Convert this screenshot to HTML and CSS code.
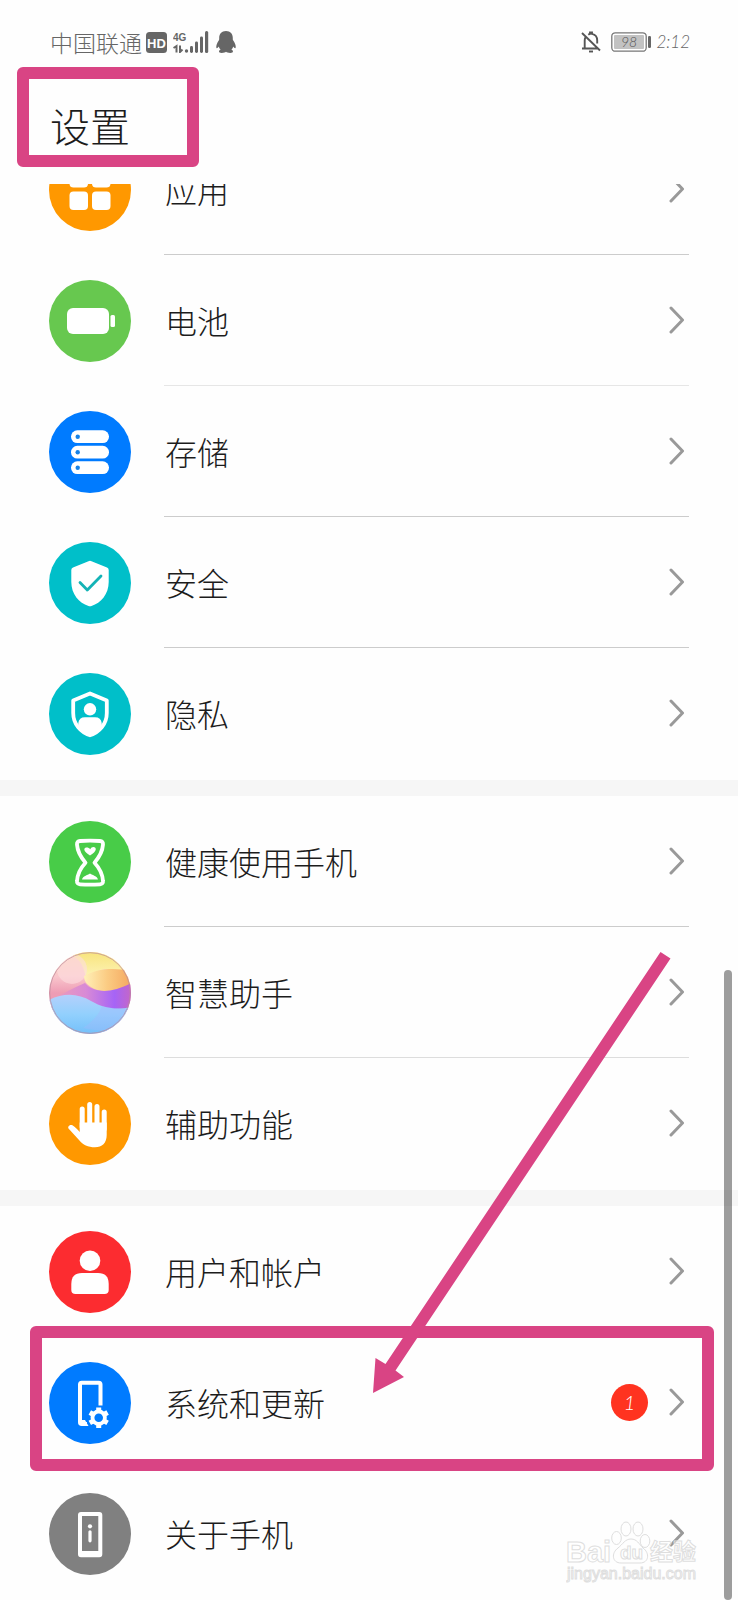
FILE: index.html
```html
<!DOCTYPE html>
<html lang="zh-CN">
<head>
<meta charset="utf-8">
<meta name="viewport" content="width=device-width, initial-scale=1">
<title>设置</title>
<link rel="stylesheet" href="styles.css">
</head>
<body>
<svg class="defs" width="0" height="0" aria-hidden="true">
  <symbol id="chevron" viewBox="0 0 16 28"><path d="M2 2 L13.500 14 L2 26" fill="none" stroke="#999" stroke-width="3" stroke-linecap="round" stroke-linejoin="round"/></symbol>
</svg>
<div class="screen">
  <header class="header">
    <div class="status">
      <div class="status-left">
        <span class="carrier">中国联通</span>
        <svg class="hd" viewBox="0 0 21 21" role="img" aria-label="HD"><rect width="21" height="21" rx="3.500" fill="#666"/><text x="10.500" y="15.500" text-anchor="middle" class="hd-text">HD</text></svg>
        <svg class="signal" viewBox="0 0 36 22" role="img" aria-label="4G">
          <text x="0" y="9.500" class="net-text">4G</text>
          <g fill="#666"><circle cx="13.500" cy="20" r="1.700"/><rect x="17" y="15" width="3" height="7" rx="1.400"/><rect x="22" y="10.500" width="3" height="11.500" rx="1.400"/><rect x="27" y="5.500" width="3" height="16.500" rx="1.400"/><rect x="32" y="0" width="3.200" height="22" rx="1.500"/></g>
          <path d="M.5 17 L3.500 15 V21.500 M7 14.500 V21 L9.500 18.500" fill="none" stroke="#666" stroke-width="2"/>
        </svg>
        <svg class="qq" viewBox="0 0 20 22" role="img" aria-label="QQ"><path d="M10 0 C5.500 0 3.200 3 3.200 7 C3.200 8 3.300 8.500 2.900 9.300 C1 12 0 14.500 .3 16.600 C.6 17.900 1.700 17 2.700 15.600 C3.100 17 3.700 18 4.600 18.800 C2.400 19.600 2.300 22 5.600 22 C8 22 9.300 21.500 10 20.800 C10.700 21.500 12 22 14.400 22 C17.700 22 17.600 19.600 15.400 18.800 C16.300 18 16.900 17 17.300 15.600 C18.300 17 19.400 17.900 19.700 16.600 C20 14.500 19 12 17.100 9.300 C16.700 8.500 16.800 8 16.800 7 C16.800 3 14.500 0 10 0Z" fill="#666"/></svg>
      </div>
      <div class="status-right">
        <svg class="bell" viewBox="0 0 20 22" role="img" aria-label="静音"><g fill="none" stroke="#555" stroke-width="1.900"><path d="M1 2 L19 19.500 M1 17.500 H16.500 M3.700 17 V9.500 C3.700 8 4 7 4.500 6.200 M7.300 3.800 C8 3.300 8.600 3 9 2.900 V1.500 H11 V2.900 C14 3.500 16.200 6 16.200 9.500 V12.500"/><path d="M8 20.500 H12"/></g></svg>
        <svg class="battery" viewBox="0 0 41 20" role="img" aria-label="98"><rect x=".8" y=".8" width="34.400" height="18.400" rx="3.500" fill="#fff" stroke="#777" stroke-width="1.300"/><rect x="3" y="3" width="30" height="14" rx="1" fill="#c2c2c2"/><rect x="37" y="4" width="3" height="12" rx="1.200" fill="#666"/><text x="18" y="15" text-anchor="middle" class="battery-text">98</text></svg>
        <time class="clock">2:12</time>
      </div>
    </div>
    <h1 class="title">设置</h1>
  </header>

  <main class="list">
    <section class="group group-first">
      <a class="row" href="#apps">
        <svg class="icon" viewBox="0 0 82 82" aria-hidden="true"><circle cx="41" cy="41" r="41" fill="#ff9800"/><g fill="#fff"><rect x="20.500" y="20" width="18.500" height="18.500" rx="4"/><rect x="43" y="20" width="18.500" height="18.500" rx="4"/><rect x="20.500" y="42.500" width="18.500" height="18.500" rx="4"/><rect x="43" y="42.500" width="18.500" height="18.500" rx="4"/></g></svg>
        <span class="body"><span class="label">应用</span><svg class="chevron"><use href="#chevron"/></svg></span>
      </a>
      <a class="row row-faint" href="#battery">
        <svg class="icon" viewBox="0 0 82 82" aria-hidden="true"><circle cx="41" cy="41" r="41" fill="#67c84f"/><rect x="18" y="28" width="42" height="26" rx="6" fill="#fff"/><rect x="61.500" y="35" width="4.500" height="12" rx="1.500" fill="#fff"/></svg>
        <span class="body"><span class="label">电池</span><svg class="chevron"><use href="#chevron"/></svg></span>
      </a>
      <a class="row" href="#storage">
        <svg class="icon" viewBox="0 0 82 82" aria-hidden="true"><circle cx="41" cy="41" r="41" fill="#007bff"/><g fill="#fff"><rect x="22" y="19.300" width="38" height="12.700" rx="6.300"/><rect x="22" y="34.800" width="38" height="12.700" rx="6.300"/><rect x="22" y="50.300" width="38" height="12.700" rx="6.300"/></g><g fill="#1682e8"><circle cx="28.700" cy="25.700" r="2.200"/><circle cx="28.700" cy="41.200" r="2.200"/><circle cx="28.700" cy="56.700" r="2.200"/></g></svg>
        <span class="body"><span class="label">存储</span><svg class="chevron"><use href="#chevron"/></svg></span>
      </a>
      <a class="row" href="#security">
        <svg class="icon" viewBox="0 0 82 82" aria-hidden="true"><circle cx="41" cy="41" r="41" fill="#00bfc9"/><path d="M39.500 19.200 Q41 18.400 42.500 19.200 L58 25.500 Q59.700 26.300 59.700 28 V40 C59.700 52 52 61 42.500 64 Q41 64.500 39.500 64 C30 61 22.300 52 22.300 40 V28 Q22.300 26.300 24 25.500 Z" fill="#fff"/><path d="M31 40.500 L38.300 48 L52 34" fill="none" stroke="#14b3b6" stroke-width="2.800" stroke-linecap="round" stroke-linejoin="round"/></svg>
        <span class="body"><span class="label">安全</span><svg class="chevron"><use href="#chevron"/></svg></span>
      </a>
      <a class="row" href="#privacy">
        <svg class="icon" viewBox="0 0 82 82" aria-hidden="true"><circle cx="41" cy="41" r="41" fill="#00bfc9"/><path d="M41 20.500 L57.800 27.500 V40 C57.800 51 50.500 59 41 62.300 C31.500 59 24.200 51 24.200 40 V27.500 Z" fill="none" stroke="#fff" stroke-width="3.800" stroke-linejoin="round"/><circle cx="41" cy="36.300" r="6.200" fill="#fff"/><path d="M29.300 53 V50 Q30 44.300 36 44.300 H46 Q52 44.300 52.700 50 V53 Q48 59.500 41 62 Q34 59.500 29.300 53 Z" fill="#fff"/></svg>
        <span class="body"><span class="label">隐私</span><svg class="chevron"><use href="#chevron"/></svg></span>
      </a>
    </section>

    <section class="group">
      <a class="row" href="#digital-balance">
        <svg class="icon" viewBox="0 0 82 82" aria-hidden="true"><circle cx="41" cy="41" r="41" fill="#48cc48"/><path d="M31 20 Q41 19.300 51 20 Q54.300 20.300 54 23.500 C53.500 31 50 36.500 45.500 41.700 C50 46.500 53.500 52 54 60 Q54.300 63 51 63.300 Q41 64 31 63.300 Q27.700 63 28 60 C28.500 52 32 46.500 36.500 41.700 C32 36.500 28.500 31 28 23.500 Q27.700 20.300 31 20 Z" fill="none" stroke="#fff" stroke-width="3.800" stroke-linejoin="round"/><path d="M41 34.500 C38 32.500 35.300 30.500 35.300 28.500 C35.500 26 39.500 26 41.300 28.200 C42.500 25.300 46.800 25.500 46.800 28.300 C46.800 30.500 44 32.500 41 34.500 Z M33 58.500 C34 55 38 54.500 41 52.500 C44 54.500 48 55 49 58.500 Z" fill="#fff"/></svg>
        <span class="body"><span class="label">健康使用手机</span><svg class="chevron"><use href="#chevron"/></svg></span>
      </a>
      <a class="row row-soft" href="#assistant">
        <svg class="icon" viewBox="0 0 82 82" aria-hidden="true">
          <defs>
            <linearGradient id="warm" x1="0" y1="0" x2="0" y2="1"><stop offset="0" stop-color="#fbd3b0"/><stop offset=".3" stop-color="#f9c6cc"/><stop offset=".5" stop-color="#ee9cb4"/></linearGradient>
            <linearGradient id="sun" x1="0" y1="0" x2="0" y2="1"><stop offset="0" stop-color="#f8e47c"/><stop offset="1" stop-color="#fdf3b8"/></linearGradient>
            <linearGradient id="flare" x1="0" y1="0" x2="1" y2="0"><stop offset="0" stop-color="#fff0b8"/><stop offset=".5" stop-color="#fbcb82"/><stop offset="1" stop-color="#f5a860"/></linearGradient>
            <linearGradient id="violet" x1="0" y1="0" x2="1" y2="0"><stop offset="0" stop-color="#f0a0b4"/><stop offset=".45" stop-color="#d88ad6"/><stop offset=".8" stop-color="#a664f6"/><stop offset="1" stop-color="#c466c8"/></linearGradient>
            <linearGradient id="sky" x1="0" y1="0" x2="0" y2="1"><stop offset="0" stop-color="#b4d0fc"/><stop offset=".5" stop-color="#92d0fd"/><stop offset="1" stop-color="#74c0fa"/></linearGradient>
            <clipPath id="orb"><circle cx="41" cy="41" r="41"/></clipPath>
          </defs>
          <g clip-path="url(#orb)">
            <rect width="82" height="82" fill="url(#warm)"/>
            <path d="M24 0 H82 V24 C68 14 50 15 37 26 C35 16 32 8 24 4 Z" fill="url(#sun)"/>
            <circle cx="23" cy="17" r="15" fill="#fddde0" opacity=".6"/>
            <path d="M35 24 C48 17 62 15 82 19 V33 C68 40 50 41 42 35 C37 32 35 28 35 24 Z" fill="url(#flare)"/>
            <path d="M0 50 C12 42 24 36 36 31 C44 41 62 42 82 31 V58 H0 Z" fill="url(#violet)"/>
            <path d="M0 48 C16 40 30 42 42 49 C56 57 68 58 82 55 V82 H0 Z" fill="url(#sky)"/>
            <path d="M34 76 C46 68 51 60 53 54 C64 57 74 57 82 55 V74 C70 80 52 80 34 76 Z" fill="#a4b8fb" opacity=".35"/>
          </g>
          <circle cx="41" cy="41" r="40.300" fill="none" stroke="#b98a9a" stroke-width="1" opacity=".7"/>
        </svg>
        <span class="body"><span class="label">智慧助手</span><svg class="chevron"><use href="#chevron"/></svg></span>
      </a>
      <a class="row" href="#accessibility">
        <svg class="icon" viewBox="0 0 82 82" aria-hidden="true"><circle cx="41" cy="41" r="41" fill="#ff9800"/><g fill="none" stroke="#fff" stroke-width="5" stroke-linecap="round"><path d="M33.200 26 V44 M40.700 21.500 V44 M48 23.500 V44 M55.200 29 V46"/></g><path d="M30.700 39.500 H57.700 V52 C57.700 60 53 64.300 46 64.300 C39 64.300 34 62 30 57 L19.500 45.500 C18.500 43.500 20.500 41.500 23 42 C26 43.500 28.500 46.500 30.700 49 Z" fill="#fff"/></svg>
        <span class="body"><span class="label">辅助功能</span><svg class="chevron"><use href="#chevron"/></svg></span>
      </a>
    </section>

    <section class="group">
      <a class="row row-plain" href="#accounts">
        <svg class="icon" viewBox="0 0 82 82" aria-hidden="true"><circle cx="41" cy="41" r="41" fill="#fc2c30"/><circle cx="41" cy="29.700" r="10.300" fill="#fff"/><path d="M33 42 H49 Q59.700 42 59.700 53 V59 Q59.700 63 55.500 63 H26.500 Q22.300 63 22.300 59 V53 Q22.300 42 33 42 Z" fill="#fff"/></svg>
        <span class="body"><span class="label">用户和帐户</span><svg class="chevron"><use href="#chevron"/></svg></span>
      </a>
      <a class="row row-plain row-marked" href="#system">
        <svg class="icon" viewBox="0 0 82 82" aria-hidden="true"><circle cx="41" cy="41" r="41" fill="#007bff"/><path d="M51.500 43.500 V22.500 Q51.500 20.700 49.700 20.700 H32.800 Q31 20.700 31 22.500 V60.200 Q31 62 32.800 62 H38" fill="none" stroke="#fff" stroke-width="4"/><path d="M31 58 L36 58 L39.500 64 H33 Z" fill="#fff"/><circle cx="49.700" cy="55.700" r="6.200" fill="none" stroke="#fff" stroke-width="3.800"/><g stroke="#fff" stroke-width="5"><path d="M49.700 45.400 V49 M49.700 62.400 V66 M40.800 50.500 L44 52.300 M55.400 59.100 L58.600 60.900 M40.800 60.900 L44 59.100 M55.400 52.300 L58.600 50.500"/></g></svg>
        <span class="body"><span class="label">系统和更新</span><span class="badge">1</span><svg class="chevron"><use href="#chevron"/></svg></span>
      </a>
      <a class="row" href="#about">
        <svg class="icon" viewBox="0 0 82 82" aria-hidden="true"><circle cx="41" cy="41" r="41" fill="#808080"/><path fill-rule="evenodd" d="M32 19 H50.300 Q53.300 19 53.300 22 V61.300 Q53.300 64.300 50.300 64.300 H32 Q29 64.300 29 61.300 V22 Q29 19 32 19 Z M33 23 V58 H49.300 V23 Z" fill="#fff"/><circle cx="41" cy="33.300" r="2.100" fill="#fff"/><path d="M41 38.800 V47.800" stroke="#fff" stroke-width="3.200" stroke-linecap="round"/></svg>
        <span class="body"><span class="label">关于手机</span><svg class="chevron"><use href="#chevron"/></svg></span>
      </a>
    </section>
  </main>

  <svg class="arrow" viewBox="0 0 298 442" aria-hidden="true"><path d="M287.500 0 L297.500 6.500 L22.500 418.500 L31 425 L0 441 L2.500 406 L12.500 412 Z" fill="#d94484"/></svg>
  <div class="scrollbar"></div>
  <svg class="watermark" viewBox="0 0 134 66" role="img" aria-label="Bai du 经验 jingyan.baidu.com">
    <g class="wm-shape">
      <ellipse cx="60" cy="10" rx="5" ry="7"/><ellipse cx="72" cy="10" rx="5" ry="7"/><ellipse cx="50.500" cy="19" rx="4.800" ry="6.500"/><ellipse cx="79" cy="22" rx="4.800" ry="6.500"/>
      <path d="M65 20 C71 20 73 25 77 29 C84 34 83 44 74 44 H55 C46 44 45 34 52 29 C57 25 59 20 65 20 Z"/>
    </g>
    <text class="wm-name" x="0" y="43">Bai</text>
    <text class="wm-du" x="54" y="40">du</text>
    <text class="wm-cjk" x="84" y="41">经验</text>
    <text class="wm-url" x="1" y="60">jingyan.baidu.com</text>
  </svg>
</div>
</body>
</html>
```
FILE: styles.css
```css
* {
  box-sizing: border-box;
}

body {
  margin: 0;
  background: #fefefe;
  color: #1c1c1c;
  font-family: "Noto Sans CJK SC", sans-serif;
  font-weight: 300;
}

.defs {
  position: absolute;
}

.screen {
  position: relative;
  overflow: hidden;
}

/* Header */

.header {
  padding-bottom: 17px;
}

.status {
  display: flex;
  justify-content: space-between;
  height: 67px;
  padding: 17px 48px 0 50px;
  color: #666;
}

.status-left,
.status-right {
  display: flex;
  align-items: center;
}

.carrier {
  margin-right: 4px;
  font-size: 23px;
  line-height: 32px;
}

.hd {
  width: 21px;
  height: 21px;
  margin-right: 6px;
}

.signal {
  width: 36px;
  height: 22px;
  margin-right: 7px;
}

.qq {
  width: 20px;
  height: 22px;
}

.bell {
  width: 20px;
  height: 22px;
  margin-right: 10px;
}

.battery {
  width: 41px;
  height: 20px;
  margin-right: 4px;
}

.clock {
  font-family: Lato, sans-serif;
  font-size: 17px;
  font-style: italic;
  line-height: 24px;
}

.hd-text {
  fill: #fff;
  font: bold 13px "Liberation Sans", sans-serif;
}

.net-text {
  fill: #666;
  font: bold 10px "Liberation Sans", sans-serif;
}

.battery-text {
  fill: #555;
  font: italic 300 14px Lato, sans-serif;
}

.title {
  width: fit-content;
  margin: 0 0 0 17px;
  padding: 22px 57px 6px 21px;
  border: 12px solid #d94484;
  border-radius: 6px;
  font-size: 40px;
  font-weight: 300;
  line-height: 48px;
}

/* Settings list */

.list {
  overflow: hidden;
}

.group {
  padding-bottom: 1px;
}

.group + .group {
  border-top: 16px solid #f6f6f6;
}

/* The list is scrolled, so its first row is partly under the header. */
.group-first {
  margin-top: -60px;
}

.row {
  position: relative;
  display: flex;
  align-items: center;
  gap: 33px;
  padding: 0 49px;
  color: inherit;
  text-decoration: none;
}

.icon {
  flex: none;
  width: 82px;
  height: 82px;
}

.body {
  display: flex;
  flex: 1;
  align-items: center;
  height: 131px;
  padding: 0 4px 0 1px;
  border-bottom: 1px solid #ccc;
}

.row:last-child .body,
.row-plain .body {
  border-bottom-color: transparent;
}

.row-faint .body {
  border-bottom-color: #e6e6e6;
}

.row-soft .body {
  border-bottom-color: #ddd;
}

.label {
  flex: 1;
  font-size: 32px;
  line-height: 40px;
}

.chevron {
  flex: none;
  width: 16px;
  height: 28px;
}

.badge {
  width: 37px;
  height: 37px;
  margin-right: 21px;
  border-radius: 50%;
  background: #ff3320;
  color: #fff;
  font-family: Lato, sans-serif;
  font-size: 20px;
  font-style: italic;
  line-height: 37px;
  text-align: center;
}

/* Annotations */

.row-marked::after {
  content: "";
  position: absolute;
  inset: -11px 24px -3px 30px;
  border: 12px solid #d94484;
  border-radius: 6px;
}

.arrow {
  position: absolute;
  top: 952px;
  right: 67px;
  width: 298px;
  height: 442px;
}

.scrollbar {
  position: absolute;
  top: 970px;
  right: 6px;
  bottom: 0;
  width: 8px;
  border-radius: 4px;
  background: rgba(0, 0, 0, 0.38);
}

.watermark {
  position: absolute;
  right: 38px;
  bottom: 15px;
  width: 134px;
  height: 66px;
  fill: #fff;
  stroke: #dedede;
  stroke-width: 1;
  pointer-events: none;
}

.wm-shape {
  fill: none;
}

.wm-name {
  font: bold 29px "Liberation Sans", sans-serif;
}

.wm-du {
  font: bold 19px "Liberation Sans", sans-serif;
}

.wm-cjk {
  fill: none;
  font: bold 23px "Noto Sans CJK SC", sans-serif;
}

.wm-url {
  font: 16px "Liberation Sans", sans-serif;
}
```
